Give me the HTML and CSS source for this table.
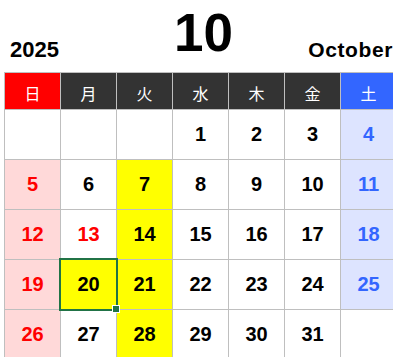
FILE: index.html
```html
<!DOCTYPE html>
<html lang="ja">
<head>
<meta charset="utf-8">
<link rel="stylesheet" href="styles.css">
</head>
<body>
<div class="page">
  <div class="title">
    <div class="year">2025</div>
    <div class="month">10</div>
    <div class="month-en">October</div>
  </div>
  <div class="cal">
    <div class="wd sun">日</div>
    <div class="wd">月</div>
    <div class="wd">火</div>
    <div class="wd">水</div>
    <div class="wd">木</div>
    <div class="wd">金</div>
    <div class="wd sat">土</div>

    <div class="d"></div>
    <div class="d"></div>
    <div class="d"></div>
    <div class="d">1</div>
    <div class="d">2</div>
    <div class="d">3</div>
    <div class="d sat">4</div>

    <div class="d sun">5</div>
    <div class="d">6</div>
    <div class="d hl">7</div>
    <div class="d">8</div>
    <div class="d">9</div>
    <div class="d">10</div>
    <div class="d sat">11</div>

    <div class="d sun">12</div>
    <div class="d hol">13</div>
    <div class="d hl">14</div>
    <div class="d">15</div>
    <div class="d">16</div>
    <div class="d">17</div>
    <div class="d sat">18</div>

    <div class="d sun">19</div>
    <div class="d hl sel">20<span class="handle"></span></div>
    <div class="d hl">21</div>
    <div class="d">22</div>
    <div class="d">23</div>
    <div class="d">24</div>
    <div class="d sat">25</div>

    <div class="d sun">26</div>
    <div class="d">27</div>
    <div class="d hl">28</div>
    <div class="d">29</div>
    <div class="d">30</div>
    <div class="d">31</div>
    <div class="d"></div>
  </div>
</div>
</body>
</html>
```
FILE: styles.css
```css
html, body {
  margin: 0;
  padding: 0;
  background: #ffffff;
  overflow: hidden;
}
body {
  width: 393px;
  height: 357px;
  font-family: "Liberation Sans", Arial, sans-serif;
}
.page {
  padding-left: 4px;
}
.title {
  width: 392px;
  height: 72px;
  display: grid;
  grid-template-columns: 1fr auto 1fr;
  align-items: end;
  color: #000;
  font-weight: bold;
}
.year {
  font-size: 22px;
  padding-left: 6px;
  padding-bottom: 11px;
  line-height: 1;
}
.month {
  font-size: 53px;
  line-height: 1;
  padding-left: 7px;
  padding-bottom: 13px;
}
.month-en {
  font-size: 21px;
  letter-spacing: 0.6px;
  line-height: 1;
  justify-self: end;
  padding-right: 3px;
  padding-bottom: 12px;
}
.cal {
  display: grid;
  grid-template-columns: repeat(7, 55px);
  grid-template-rows: 36px repeat(5, 49px);
  gap: 1px;
  padding: 1px;
  background: #bfbfbf;
  width: max-content;
}
.wd {
  background: #333333;
  color: #ffffff;
  font-family: "Noto Sans CJK JP", sans-serif;
  font-size: 16px;
  display: flex;
  align-items: center;
  justify-content: center;
  padding-top: 3px;
  box-sizing: border-box;
}
.wd.sun { background: #ff0000; }
.wd.sat { background: #3366ff; }
.d {
  background: #ffffff;
  color: #000000;
  font-weight: bold;
  font-size: 20px;
  display: flex;
  align-items: center;
  justify-content: center;
  position: relative;
}
.d.sun { background: #ffd9d9; color: #ff0000; }
.d.sat { background: #dde4ff; color: #3366ff; }
.d.hol { color: #ff0000; }
.d.hl { background: #ffff00; }
.d.sel {
  outline: 2px solid #217346;
  outline-offset: 0px;
  z-index: 2;
}
.handle {
  position: absolute;
  right: -4px;
  bottom: -4px;
  width: 6px;
  height: 6px;
  background: #217346;
  border: 1px solid #ffffff;
  box-sizing: content-box;
}
```
